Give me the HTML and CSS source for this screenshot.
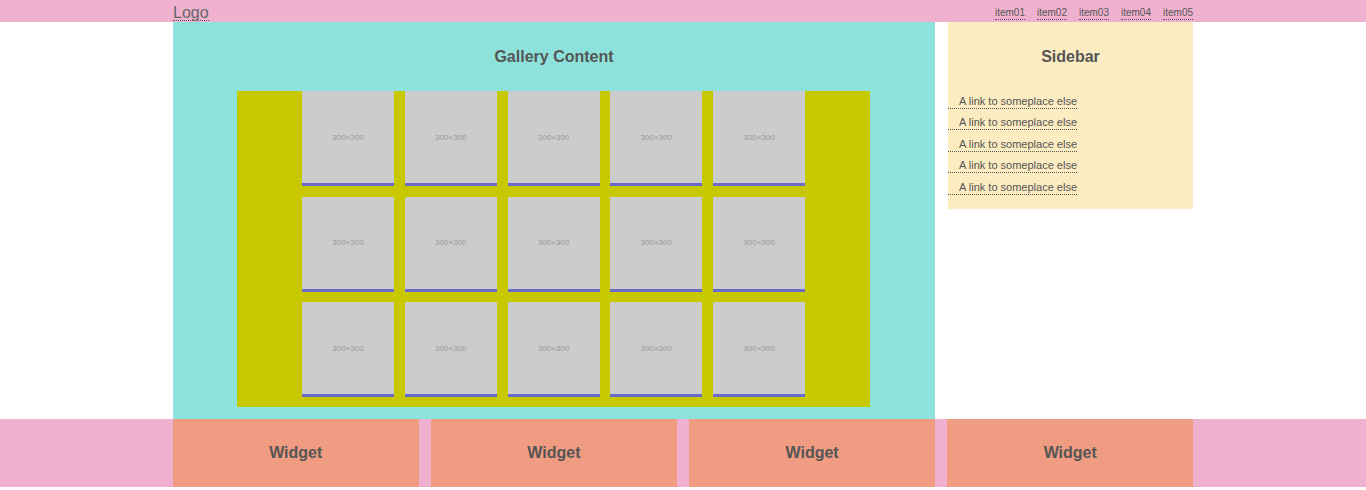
FILE: index.html
```html
<!DOCTYPE html>
<html lang="en">
<head>
    <meta charset="UTF-8">
    <meta name="viewport" content="width=device-width, initial-scale=1.0">
    <title>Gallery Layout</title>
    <link rel="stylesheet" href="styles.css">
</head>
<body>
    <header class="site-header">
        <div class="header-inner">
            <a class="logo" href="#">Logo</a>
            <nav class="main-nav">
                <a href="#">item01</a>
                <a href="#">item02</a>
                <a href="#">item03</a>
                <a href="#">item04</a>
                <a href="#">item05</a>
            </nav>
        </div>
    </header>

    <div class="page">
        <main class="gallery">
            <h2>Gallery Content</h2>
            <div class="tiles">
                <div class="tile">300×300</div>
                <div class="tile">300×300</div>
                <div class="tile">300×300</div>
                <div class="tile">300×300</div>
                <div class="tile">300×300</div>
                <div class="tile">300×300</div>
                <div class="tile">300×300</div>
                <div class="tile">300×300</div>
                <div class="tile">300×300</div>
                <div class="tile">300×300</div>
                <div class="tile">300×300</div>
                <div class="tile">300×300</div>
                <div class="tile">300×300</div>
                <div class="tile">300×300</div>
                <div class="tile">300×300</div>
            </div>
        </main>

        <aside class="sidebar">
            <h2>Sidebar</h2>
            <ul class="side-links">
                <li><a href="#">A link to someplace else</a></li>
                <li><a href="#">A link to someplace else</a></li>
                <li><a href="#">A link to someplace else</a></li>
                <li><a href="#">A link to someplace else</a></li>
                <li><a href="#">A link to someplace else</a></li>
            </ul>
        </aside>
    </div>

    <footer class="site-footer">
        <div class="widgets">
            <div class="widget">Widget</div>
            <div class="widget">Widget</div>
            <div class="widget">Widget</div>
            <div class="widget">Widget</div>
        </div>
    </footer>
</body>
</html>
```

FILE: styles.css
```css
/* Base */
body {
    margin: 0;
    font-family: "Liberation Sans", Arial, sans-serif;
    color: #555;
    background: #fff;
}

a {
    color: #555;
    text-decoration: none;
    border-bottom: 1px dotted #555;
}

h2 {
    margin: 25px 0 24px;
    font-size: 16px;
    line-height: 20px;
    text-align: center;
}

/* Header */
.site-header {
    background: #efb1cf;
}

.header-inner {
    width: 1020px;
    height: 22px;
    margin: 0 auto;
    display: flex;
    justify-content: space-between;
    align-items: flex-end;
}

.logo {
    font-size: 16px;
    line-height: 15px;
    margin-bottom: 1px;
    color: #666;
}

.main-nav {
    display: flex;
    gap: 12px;
    margin-bottom: 2px;
}

.main-nav a {
    font-size: 10px;
    line-height: 13px;
}

/* Content */
.page {
    width: 1020px;
    margin: 0 auto;
    display: flex;
    gap: 13px;
    align-items: flex-start;
}

.gallery {
    width: 762px;
    background: #8de3db;
    padding-bottom: 12px;
}

.tiles {
    width: 633px;
    margin-left: 64px;
    padding-bottom: 10px;
    background: #c8c800;
    display: grid;
    grid-template-columns: repeat(5, 92px);
    justify-content: center;
    column-gap: 10.75px;
    row-gap: 10.5px;
}

.tile {
    height: 92px;
    background: #cccccc;
    border-bottom: 3px solid #6b6bcc;
    display: flex;
    align-items: center;
    justify-content: center;
    font-size: 8px;
    color: #999;
}

.sidebar {
    width: 245px;
    background: #fbecc1;
    padding-bottom: 14px;
}

.sidebar h2 {
    margin-bottom: 20px;
}

.side-links {
    list-style: none;
    margin: 0;
    padding: 0;
}

.side-links li {
    display: flex;
    padding-top: 6.5px;
}

.side-links a {
    padding-left: 11px;
    font-size: 11px;
    line-height: 14px;
}

/* Footer */
.site-footer {
    background: #efb1cf;
}

.widgets {
    width: 1020px;
    margin: 0 auto;
    display: grid;
    grid-template-columns: repeat(4, 1fr);
    column-gap: 12.67px;
}

.widget {
    height: 68px;
    background: #f09c82;
    display: flex;
    align-items: center;
    justify-content: center;
    font-size: 16px;
    font-weight: bold;
}
```
